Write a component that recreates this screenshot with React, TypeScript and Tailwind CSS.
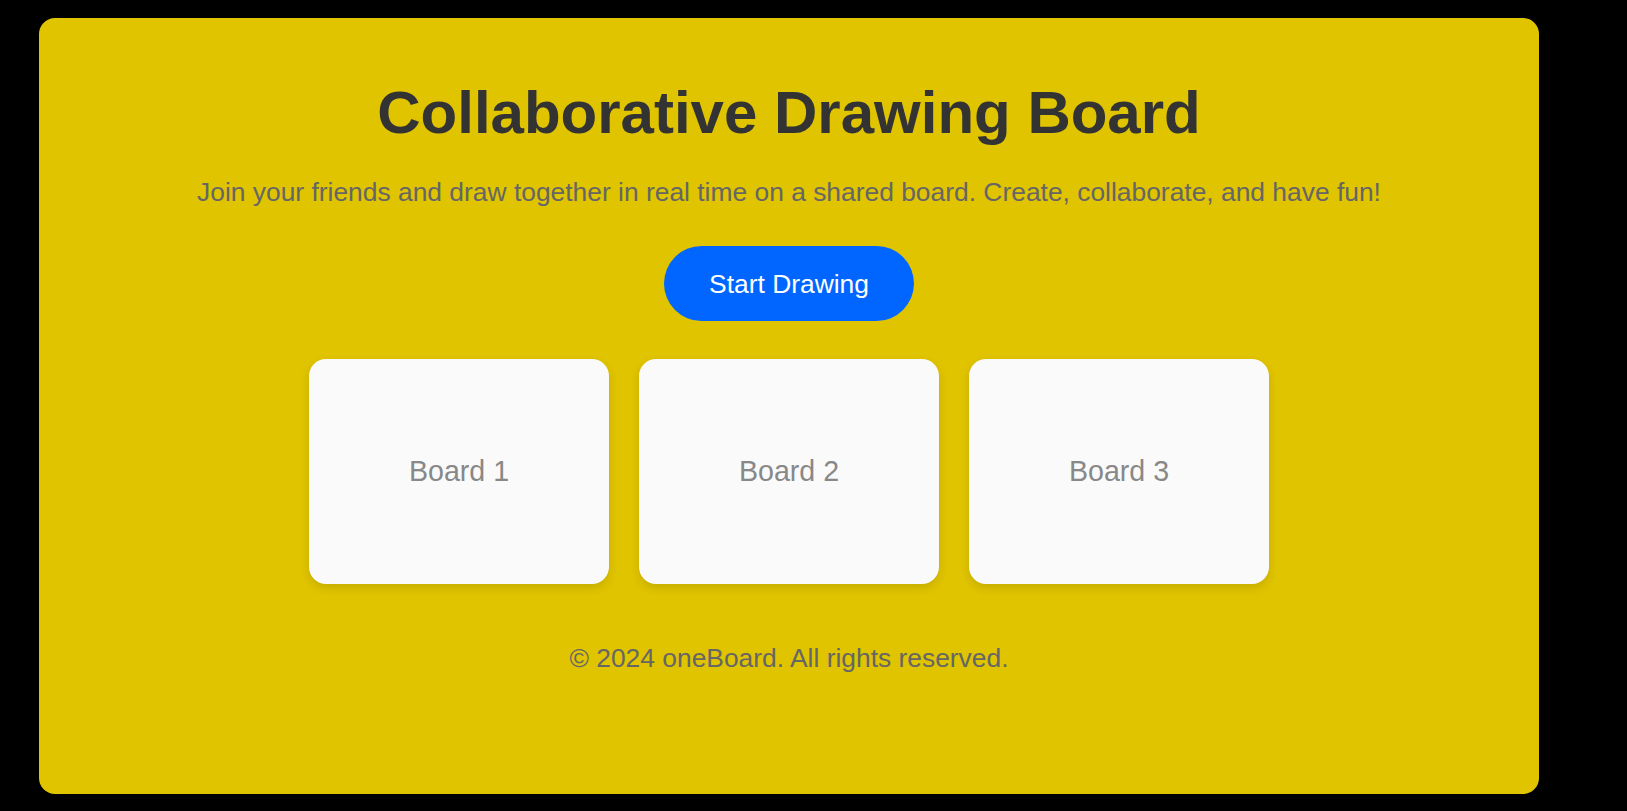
export default function App() {
  const boards = ["Board 1", "Board 2", "Board 3"];

  return (
    <div className="min-h-screen bg-black pt-[18px] pb-[17px] font-['Liberation_Sans',Arial,sans-serif]">
      <div className="ml-[39px] w-[1500px] rounded-[16px] bg-[#e0c400] pt-[60px] pb-[121px] flex flex-col items-center text-center">
        <h1 className="text-[60px] leading-[69px] font-bold text-[#333333]">
          Collaborative Drawing Board
        </h1>
        <p className="mt-[30px] text-[26.4px] leading-[30px] text-[#666666]">
          Join your friends and draw together in real time on a shared board. Create, collaborate, and have fun!
        </p>
        <button className="mt-[39px] h-[75px] w-[250px] rounded-full bg-[#0066ff] text-[26.4px] leading-[30px] text-white">
          Start Drawing
        </button>
        <div className="mt-[38px] flex gap-[30px]">
          {boards.map((b) => (
            <div
              key={b}
              className="flex h-[225px] w-[300px] items-center justify-center rounded-[17px] bg-[#fafafa] text-[28.6px] text-[#888888] shadow-[0_4px_10px_rgba(0,0,0,0.12)]"
            >
              {b}
            </div>
          ))}
        </div>
        <footer className="mt-[59px] text-[26.4px] leading-[30px] text-[#666666]">
          © 2024 oneBoard. All rights reserved.
        </footer>
      </div>
    </div>
  );
}
